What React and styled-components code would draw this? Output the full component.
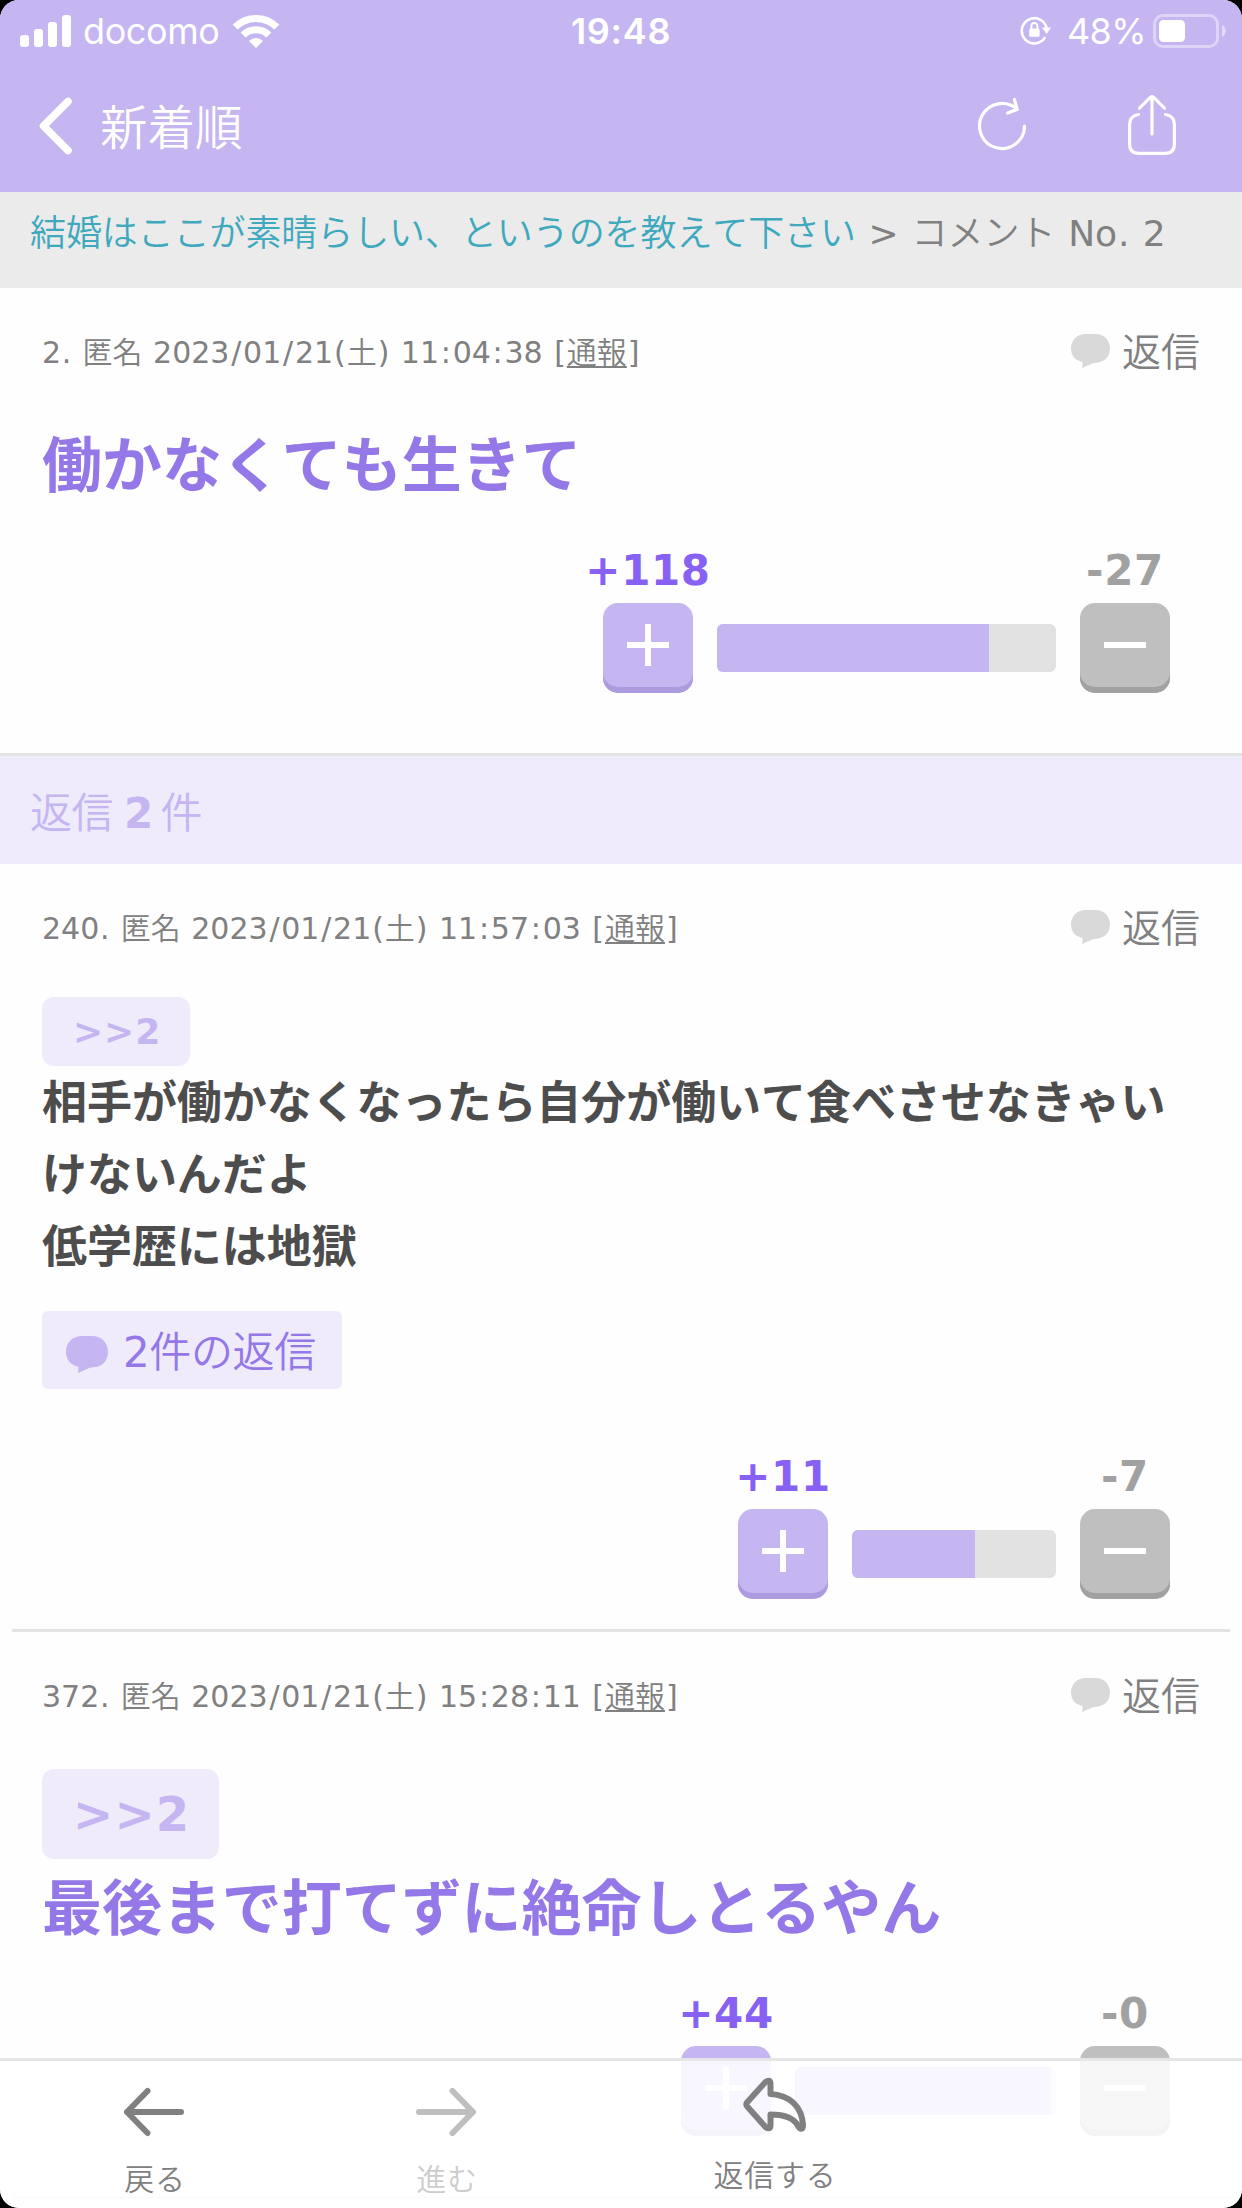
import React from "react";
import styled, { createGlobalStyle } from "styled-components";

const jp = `"Noto Sans CJK JP", sans-serif`;
const body = `"DejaVu Sans", "Noto Sans CJK JP", sans-serif`;
const lilac = "#c5b5f1";
const pale = "#efebfa";
const violet = "#9478e8";
const gray = "#808080";
const rule = "#e3e3e3";

const GlobalStyle = createGlobalStyle`
  html, body { margin: 0; padding: 0; background: #000; }
  * { box-sizing: border-box; }
  body { font-family: ${body}; font-kerning: none; -webkit-font-smoothing: antialiased; }
  svg { display: block; flex: none; }
`;

const Screen = styled.div`
  position: relative;
  width: 1242px;
  height: 2208px;
  overflow: hidden;
  border-radius: 19px;
  background: #fefefe;
  display: flex;
  flex-direction: column;
`;

const Header = styled.header`
  flex: none;
  height: 192px;
  background: ${lilac};
  color: #fff;
`;

const StatusBar = styled.div`
  height: 62px;
  padding: 0 15px 0 20px;
  display: grid;
  grid-template-columns: 1fr auto 1fr;
  align-items: center;
  font-family: Inter, sans-serif;
  font-size: 36px;
  line-height: 62px;
`;

const StatusSide = styled.div`
  display: flex;
  align-items: center;
  justify-content: ${(p) => (p.$end ? "flex-end" : "flex-start")};
`;

const Carrier = styled.span`
  margin: 0 13px 0 12px;
  letter-spacing: -0.4px;
`;

const Time = styled.span`
  margin-right: 5px;
  font-weight: 600;
  letter-spacing: 0.7px;
`;

const Percent = styled.span`
  margin: 0 7px 0 15px;
  letter-spacing: -0.6px;
`;

const NavBar = styled.div`
  height: 130px;
  padding: 0 66px 0 39px;
  display: flex;
  align-items: flex-start;
`;

const BackIcon = styled.svg`
  margin-top: 35px;
`;

const NavTitle = styled.h1`
  margin: 29px auto 0 27px;
  font: 350 47.5px/68px ${jp};
`;

const RefreshIcon = styled.svg`
  margin: 33px 99px 0 0;
`;

const ShareIcon = styled.svg`
  margin-top: 31px;
`;

const Crumbs = styled.div`
  flex: none;
  height: 96px;
  padding: 12px 0 0 30px;
  background: #ebebeb;
  color: ${gray};
  font-size: 36px;
  line-height: 60px;
  white-space: pre;
`;

const Cjk = styled.span`
  font-family: ${jp};
  font-weight: 350;
  line-height: 1;
`;

const CrumbLink = styled(Cjk).attrs({ as: "a" })`
  color: #3ea8bd;
  letter-spacing: -0.09px;
`;

const Comment = styled.article`
  flex: none;
  margin: 0 ${(p) => (p.$inset ? 12 : 0)}px;
  padding: 35px ${(p) => (p.$inset ? 30 : 42)}px ${(p) => p.$bottom}px;
  border-bottom: 3px solid ${rule};
`;

const MetaRow = styled.div`
  height: 60px;
  display: flex;
  align-items: center;
  justify-content: space-between;
  color: ${gray};
`;

const Meta = styled.span`
  font-size: 30px;
  line-height: 60px;
  white-space: pre;
`;

const Pad = styled.span`
  padding: 0 ${(p) => p.$em / 2}em;
`;

const Report = styled(Cjk).attrs({ as: "a" })`
  text-decoration: underline;
  text-decoration-thickness: 2px;
  text-underline-offset: 3px;
`;

const ReplyLink = styled.a`
  display: flex;
  align-items: center;
  gap: 12px;
  font-size: 39px;
  line-height: 60px;
  svg { margin-bottom: 4px; }
`;

const Quote = styled.a`
  display: block;
  width: max-content;
  margin-top: ${(p) => (p.$large ? 42 : 38)}px;
  padding: 0 29px 0 31px;
  border-radius: 12px;
  background: ${pale};
  color: ${lilac};
  font-weight: 700;
  font-size: ${(p) => (p.$large ? 48 : 36)}px;
  line-height: ${(p) => (p.$large ? 90 : 69)}px;
  letter-spacing: 0.025em;
`;

const Text = styled.p`
  margin: ${(p) => p.$top + 1}px 0 -1px;
  white-space: pre-line;
  font-weight: 700;
  color: ${(p) => (p.$large ? violet : "#4d4d4d")};
  font-size: ${(p) => (p.$large ? 60 : 45)}px;
  line-height: ${(p) => (p.$large ? 96 : 72)}px;
  letter-spacing: -0.06px;
`;

const Thread = styled.a`
  display: flex;
  align-items: center;
  gap: 15px;
  width: 300px;
  height: 78px;
  margin-top: 28px;
  padding: 6px 0 0 24px;
  border-radius: 6px;
  background: ${pale};
  color: ${violet};
  font-size: 42px;
  line-height: 72px;
  letter-spacing: -0.4px;
  svg { margin-top: 2px; }
`;

const Votes = styled.div`
  display: flex;
  justify-content: flex-end;
  align-items: flex-end;
  gap: 24px;
  height: 144px;
  margin-top: ${(p) => p.$top}px;
  padding-right: 30px;
`;

const VoteSide = styled.div`
  width: 90px;
  display: flex;
  flex-direction: column;
  align-items: center;
  gap: 11px;
`;

const Count = styled.span`
  font-weight: 700;
  font-size: 42px;
  line-height: 42px;
  letter-spacing: 0.015em;
  color: ${(p) => (p.$up ? "#8661f4" : "#a1a1a1")};
`;

const VoteButton = styled.button`
  display: flex;
  justify-content: center;
  width: 90px;
  height: 90px;
  padding: 21px 0 0;
  border: 0;
  border-radius: 15px;
  background: ${(p) => (p.$up ? lilac : "#bfbfbf")};
  box-shadow: inset 0 -6px 0 ${(p) => (p.$up ? "#ad9be0" : "#a1a1a1")};
`;

const Meter = styled.div`
  height: 48px;
  margin-bottom: 21px;
  border-radius: 6px;
  overflow: hidden;
  background: #e2e2e2;
`;

const MeterFill = styled.div`
  height: 100%;
  background: ${lilac};
`;

const RepliesHeading = styled.h2`
  flex: none;
  margin: 0;
  height: 108px;
  padding: 4px 0 0 30px;
  background: ${pale};
  color: ${lilac};
  font-weight: 400;
  font-size: 42px;
  line-height: 108px;
  letter-spacing: -0.5px;
  white-space: pre;
  b { margin: 0 -5px 0 -2px; }
`;

const TabBar = styled.nav`
  position: absolute;
  left: 0;
  bottom: 0;
  width: 100%;
  height: 150px;
  display: flex;
  border-top: 3px solid #e6e6e6;
  background: rgba(255, 255, 255, 0.88);
  background-clip: padding-box;
`;

const Tab = styled.a`
  width: ${(p) => p.$width}px;
  padding-top: ${(p) => p.$top}px;
  display: flex;
  flex-direction: column;
  align-items: center;
  gap: 16px;
  color: ${(p) => (p.$off ? "#cdcdcd" : gray)};
  font: 350 30px/48px ${jp};
  letter-spacing: 0.8px;
`;

const TabLabel = styled.span`
  margin-left: 2px;
`;

// Extra advance, in em, given to the narrow punctuation of the body font.
const extra = { "/": 0.117, ":": 0.117, "(": 0.064, ")": 0.064, "[": 0.064, "]": 0.064, ".": 0.046, " ": 0.034 };

const Spaced = ({ children }) =>
  children.split(/([/:()[\]. ]|[\u3000-\u9fff]+)/).filter(Boolean).map((part, i) => {
    if (part in extra) return <Pad key={i} $em={extra[part]}>{part}</Pad>;
    if (part >= "\u3000") return <Cjk key={i}>{part}</Cjk>;
    return part;
  });

const Bubble = ({ color, width = 39, height = 34 }) => (
  <svg width={width} height={height} viewBox="0 0 39 34" preserveAspectRatio="none" fill={color}>
    <path d="M15 0H24C33 0 39 6 39 14.6C39 23 33 28.6 25 28.8C21.5 29 17 31.5 11.2 34L11.6 28.2C4.5 26.5 0 22 0 14.6C0 6 6 0 15 0Z" />
  </svg>
);

const VoteRow = ({ plus, minus, width, ratio, top }) => (
  <Votes $top={top}>
    <VoteSide>
      <Count $up>+{plus}</Count>
      <VoteButton $up>
        <svg width="42" height="42" fill="#fff"><path d="M0 18H18V0H24V18H42V24H24V42H18V24H0Z" /></svg>
      </VoteButton>
    </VoteSide>
    <Meter style={{ width }}>
      <MeterFill style={{ width: `${ratio * 100}%` }} />
    </Meter>
    <VoteSide>
      <Count>-{minus}</Count>
      <VoteButton>
        <svg width="42" height="42" fill="#fff"><path d="M0 18H42V24H0Z" /></svg>
      </VoteButton>
    </VoteSide>
  </Votes>
);

const MetaLine = ({ no, date, time }) => (
  <MetaRow>
    <Meta>
      <Spaced>{`${no}. 匿名 ${date}(土) ${time} [`}</Spaced>
      <Report>通報</Report>
      <Spaced>]</Spaced>
    </Meta>
    <ReplyLink><Bubble color="#d9d9d9" /><span><Cjk>返信</Cjk></span></ReplyLink>
  </MetaRow>
);

export default function App() {
  return (
    <>
      <GlobalStyle />
      <Screen>
        <Header>
          <StatusBar>
            <StatusSide>
              <svg width="51" height="32" fill="#fff">
                <rect x="0" y="20" width="9" height="12" rx="3" />
                <rect x="14" y="14" width="9" height="18" rx="3" />
                <rect x="28" y="7" width="9" height="25" rx="3" />
                <rect x="42" y="0" width="9" height="32" rx="3" />
              </svg>
              <Carrier>docomo</Carrier>
              <svg width="46" height="33" viewBox="0 0 46 33" fill="none" stroke="#fff" strokeWidth="7">
                <path d="M2.2 12.1A29.5 29.5 0 0 1 43.8 12.1" />
                <path d="M10.1 20.1A18.3 18.3 0 0 1 35.9 20.1" />
                <path d="M23 33L16 26A9.9 9.9 0 0 1 30 26Z" fill="#fff" stroke="none" />
              </svg>
            </StatusSide>
            <Time>19:48</Time>
            <StatusSide $end>
              <svg width="32" height="30" viewBox="0 0 32 30" fill="none" stroke="#fff" strokeWidth="2.6">
                <path d="M26.6 12A12.6 12.6 0 1 0 25.2 21.2" />
                <path d="M22 11.4H31L26.6 18Z" fill="#fff" stroke="none" />
                <rect x="9.2" y="12.4" width="10.4" height="8.4" rx="1.5" fill="#fff" stroke="none" />
                <path d="M11.4 13V10A3 3 0 0 1 17.4 10V13" strokeWidth="2" />
              </svg>
              <Percent>48%</Percent>
              <svg width="74" height="34" viewBox="0 0 74 34" fill="#fff">
                <rect x="1.5" y="1.5" width="63" height="31" rx="8.5" fill="none" stroke="#fff" strokeOpacity=".42" strokeWidth="3" />
                <rect x="6" y="6" width="26" height="22" rx="4.5" />
                <path d="M69 11C74 13 74 21 69 23Z" fillOpacity=".5" />
              </svg>
            </StatusSide>
          </StatusBar>
          <NavBar>
            <BackIcon width="34" height="58" fill="none" stroke="#fff" strokeWidth="7.5" strokeLinecap="round" strokeLinejoin="round">
              <path d="M29 4.5L4.5 29L29 53.5" />
            </BackIcon>
            <NavTitle>新着順</NavTitle>
            <RefreshIcon width="51" height="60" fill="none" stroke="#fff" strokeWidth="3.2" strokeLinecap="round" strokeLinejoin="round">
              <path d="M46.5 31A22.5 22.5 0 1 1 39.2 14.4M36.4 4.5L39.2 14.4L29.6 18" />
            </RefreshIcon>
            <ShareIcon width="48" height="64" fill="none" stroke="#fff" strokeWidth="3.2" strokeLinecap="round" strokeLinejoin="round">
              <path d="M10.5 21.5C4.5 22.5 1.6 26 1.6 31.5V51C1.6 57 5 60.4 11 60.4H37C43 60.4 46.4 57 46.4 51V31.5C46.4 26 43.5 22.5 37.5 21.5" />
              <path d="M24 41V4M11.5 15.2L22.6 4.2Q24 2.8 25.4 4.2L36.5 15.2" />
            </ShareIcon>
          </NavBar>
        </Header>

        <Crumbs>
          <CrumbLink>結婚はここが素晴らしい、というのを教えて下さい</CrumbLink>
          <Spaced>{" > コメント No. 2"}</Spaced>
        </Crumbs>

        <Comment $bottom={60}>
          <MetaLine no="2" date="2023/01/21" time="11:04:38" />
          <Text $large $top={34}>働かなくても生きて</Text>
          <VoteRow plus={118} minus={27} width={339} ratio={0.803} top={36} />
        </Comment>

        <RepliesHeading><Cjk>返信</Cjk> <b>2</b> <Cjk>件</Cjk></RepliesHeading>

        <Comment $inset $bottom={30}>
          <MetaLine no="240" date="2023/01/21" time="11:57:03" />
          <Quote>&gt;&gt;2</Quote>
          <Text $top={1}>{"相手が働かなくなったら自分が働いて食べさせなきゃいけないんだよ\n低学歴には地獄"}</Text>
          <Thread><Bubble color={lilac} width={42} height={37} /><span>2<Cjk>件の返信</Cjk></span></Thread>
          <VoteRow plus={11} minus={7} width={204} ratio={0.604} top={66} />
        </Comment>

        <Comment $inset $bottom={60}>
          <MetaLine no="372" date="2023/01/21" time="15:28:11" />
          <Quote $large>&gt;&gt;2</Quote>
          <Text $large $top={1}>最後まで打てずに絶命しとるやん</Text>
          <VoteRow plus={44} minus={0} width={261} ratio={0.98} top={36} />
        </Comment>

        <TabBar>
          <Tab $width={308} $top={26}>
            <svg width="62" height="50" fill="none" stroke={gray} strokeWidth="6" strokeLinecap="round" strokeLinejoin="round">
              <path d="M24.5 4L4 25L24.5 46M4 25H58" />
            </svg>
            <TabLabel>戻る</TabLabel>
          </Tab>
          <Tab $width={276} $top={26} $off>
            <svg width="62" height="50" fill="none" stroke="#bfbfbf" strokeWidth="6" strokeLinecap="round" strokeLinejoin="round">
              <path d="M37.5 4L58 25L37.5 46M58 25H4" />
            </svg>
            <TabLabel>進む</TabLabel>
          </Tab>
          <Tab $width={380} $top={14}>
            <svg width="70" height="58" viewBox="-1 0 70 58" fill="none" stroke={gray} strokeWidth="6" strokeLinejoin="round">
              <path d="M7.2 27.2L25.5 7Q30.5 3.5 30.5 9V19C50 20 62 32 63 50C63 55 60 54.5 58 51C54 43 46 39.5 30.5 39.5V50Q30.5 55.5 25.5 52L7.2 31.5Q5.5 29.3 7.2 27.2Z" />
            </svg>
            <TabLabel>返信する</TabLabel>
          </Tab>
        </TabBar>
      </Screen>
    </>
  );
}
